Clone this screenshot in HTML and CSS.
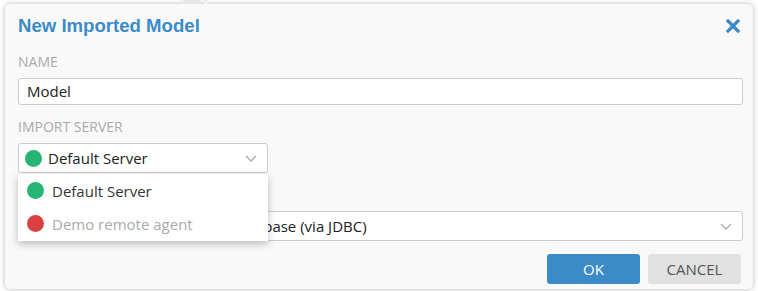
FILE: index.html
```html
<!DOCTYPE html>
<html lang="en">
<head>
    <meta charset="UTF-8">
    <meta name="viewport" content="width=device-width, initial-scale=1.0">
    <title>New Imported Model</title>
    <link rel="stylesheet" href="styles.css">
</head>
<body>
    <div class="backdrop-strip">
        <span class="strip-block"></span>
        <span class="strip-block small"></span>
    </div>

    <div class="dialog">
        <div class="dialog-header">
            <h1>New Imported Model</h1>
            <button class="close-btn" aria-label="Close">
                <svg width="14" height="14" viewBox="0 0 14 14">
                    <path d="M2 2 L12 12 M12 2 L2 12" stroke="#3a8bc8" stroke-width="3.2" stroke-linecap="square"/>
                </svg>
            </button>
        </div>

        <div class="field">
            <label>Name</label>
            <div class="input">Model</div>
        </div>

        <div class="field">
            <label>Import Server</label>
            <div class="select-wrap">
                <div class="select narrow">
                    <span class="dot green"></span>
                    <span class="select-text">Default Server</span>
                    <svg class="chevron" width="12" height="7" viewBox="0 0 12 7">
                        <path d="M1 1 L6 6 L11 1" fill="none" stroke="#aaa" stroke-width="1.3"/>
                    </svg>
                </div>
                <!-- open dropdown -->
                <ul class="menu">
                    <li class="menu-item">
                        <span class="dot green"></span>
                        Default Server
                    </li>
                    <li class="menu-item disabled">
                        <span class="dot red"></span>
                        Demo remote agent
                    </li>
                </ul>
            </div>
        </div>

        <div class="field">
            <label>Type</label>
            <div class="select">
                <span class="select-text">Microsoft Azure SQL Server - Database (via JDBC)</span>
                <svg class="chevron" width="12" height="7" viewBox="0 0 12 7">
                    <path d="M1 1 L6 6 L11 1" fill="none" stroke="#aaa" stroke-width="1.3"/>
                </svg>
            </div>
        </div>

        <div class="actions">
            <button class="btn btn-primary">OK</button>
            <button class="btn btn-secondary">Cancel</button>
        </div>
    </div>
</body>
</html>
```

FILE: styles.css
```css
* {
    margin: 0;
    padding: 0;
    box-sizing: border-box;
}

body {
    font-family: "Open Sans", "Noto Sans", sans-serif;
    background: #fff;
    color: #222;
    width: 758px;
    height: 291px;
    overflow: hidden;
}

.backdrop-strip {
    height: 4px;
    display: flex;
    padding-left: 183px;
    gap: 3px;
}

.strip-block {
    width: 18px;
    height: 4px;
    background: #e8e8e8;
}

.strip-block.small {
    width: 4px;
    background: #efefef;
}

.dialog {
    margin: 0 5px;
    height: 285px;
    background: #f9f9f9;
    border-radius: 5px;
    box-shadow: 0 0 5px rgba(0, 0, 0, 0.3);
    padding: 0 10px 0 13px;
}

.dialog-header {
    display: flex;
    align-items: center;
    justify-content: space-between;
    padding-top: 10px;
    height: 48px;
    padding-bottom: 14px;
}

h1 {
    font-family: "Liberation Sans", Arial, sans-serif;
    font-size: 18.6px;
    font-weight: 700;
    color: #3a8bc8;
    line-height: 24px;
}

.close-btn {
    border: none;
    background: none;
    width: 14px;
    height: 14px;
    margin-right: 3px;
    display: flex;
}

.field {
    margin-bottom: 12px;
}

.field label {
    display: block;
    font-size: 14px;
    line-height: 20px;
    color: #aaa;
    text-transform: uppercase;
    margin-bottom: 6px;
}

.input {
    height: 27px;
    background: #fff;
    border: 1px solid #ccc;
    border-radius: 3px;
    padding: 0 8px;
    font-size: 15px;
    line-height: 25px;
}

.select-wrap {
    position: relative;
    width: 250px;
}

.select {
    height: 30px;
    background: #fff;
    border: 1px solid #ccc;
    border-radius: 3px;
    padding: 0 10px 0 8px;
    display: flex;
    align-items: center;
    font-size: 15px;
    white-space: nowrap;
}

.select.narrow {
    padding-left: 6px;
}

.select-text {
    flex: 1;
}

.chevron {
    flex-shrink: 0;
}

.dot {
    width: 17px;
    height: 17px;
    border-radius: 50%;
    margin-right: 6px;
    flex-shrink: 0;
}

.dot.green {
    background: #27b574;
}

.dot.red {
    background: #d9403f;
}

.menu {
    position: absolute;
    top: 31px;
    left: 0;
    width: 250px;
    background: #fff;
    list-style: none;
    box-shadow: 0 3px 8px rgba(0, 0, 0, 0.25);
    padding: 0 0 1px;
    z-index: 10;
}

.menu-item {
    height: 33px;
    display: flex;
    align-items: center;
    padding-left: 9px;
    font-size: 15px;
    color: #333;
}

.menu-item .dot {
    margin-right: 8px;
}

.menu-item.disabled {
    color: #aaa;
}

.actions {
    display: flex;
    justify-content: flex-end;
    gap: 8px;
    margin-top: 13px;
    padding-right: 2px;
}

.btn {
    width: 93px;
    height: 30px;
    border: none;
    border-radius: 3px;
    font-family: "Open Sans", "Noto Sans", sans-serif;
    font-size: 15px;
    text-transform: uppercase;
}

.btn-primary {
    background: #3a8bc8;
    color: #fff;
}

.btn-secondary {
    background: #e1e1e1;
    color: #555;
}
```
